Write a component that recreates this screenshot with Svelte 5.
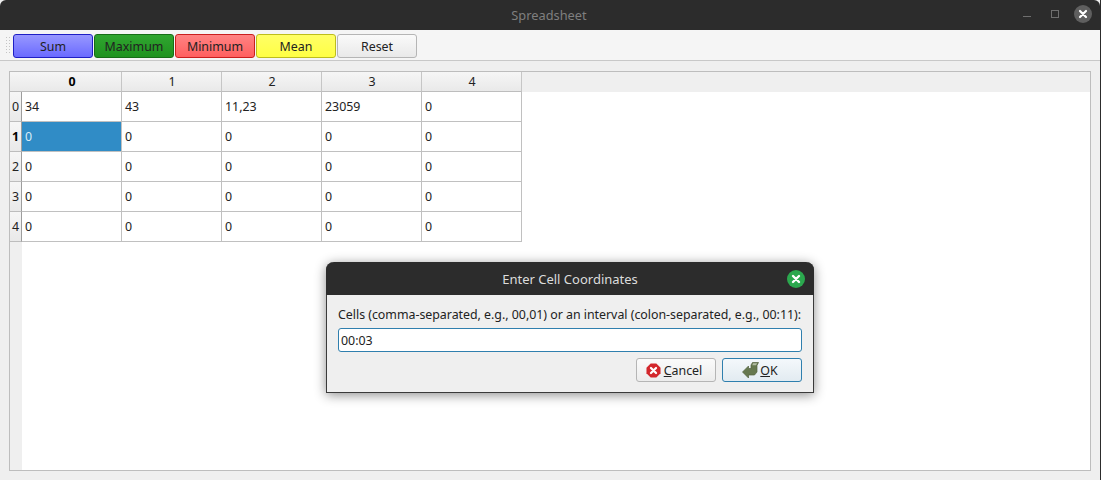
<script lang="ts">
	const columns = [0, 1, 2, 3, 4];
	const rows = [
		['34', '43', '11,23', '23059', '0'],
		['0', '0', '0', '0', '0'],
		['0', '0', '0', '0', '0'],
		['0', '0', '0', '0', '0'],
		['0', '0', '0', '0', '0']
	];
	const actions = [
		{ label: 'Sum', kind: 'sum' },
		{ label: 'Maximum', kind: 'max' },
		{ label: 'Minimum', kind: 'min' },
		{ label: 'Mean', kind: 'mean' },
		{ label: 'Reset', kind: 'reset' }
	];
	const currentRow = 1;
	const currentCol = 0;
	let coords = $state('00:03');
</script>

<div class="window">
	<header class="titlebar">
		<span class="title">Spreadsheet</span>
		<div class="controls">
			<span class="minimize"></span>
			<span class="maximize"></span>
			<span class="close">
				<svg width="18" height="18" viewBox="0 0 18 18"><path d="M6 6l6 6M12 6l-6 6" stroke="#fff" stroke-width="2.2" stroke-linecap="round" /></svg>
			</span>
		</div>
	</header>

	<div class="toolbar">
		<span class="grip"></span>
		{#each actions as action}
			<button class="tool {action.kind}">{action.label}</button>
		{/each}
	</div>

	<main class="content">
		<div class="frame">
			<div class="head">
				<div class="corner"></div>
				{#each columns as col}
					<div class="col-head" class:active={col === currentCol}>{col}</div>
				{/each}
			</div>
			<div class="body">
				<div class="row-heads">
					{#each rows as _, r}
						<div class="row-head" class:active={r === currentRow}>{r}</div>
					{/each}
				</div>
				<div class="cells">
					{#each rows as row, r}
						{#each row as value, c}
							<div class="cell" class:selected={r === currentRow && c === currentCol}>{value}</div>
						{/each}
					{/each}
				</div>
			</div>
		</div>
	</main>

	<div class="dialog">
		<div class="dialog-title">
			<span>Enter Cell Coordinates</span>
			<span class="dialog-close">
				<svg width="18" height="18" viewBox="0 0 18 18"><path d="M6 6l6 6M12 6l-6 6" stroke="#fff" stroke-width="2.4" stroke-linecap="round" /></svg>
			</span>
		</div>
		<div class="dialog-body">
			<p class="prompt">Cells (comma-separated, e.g., 00,01) or an interval (colon-separated, e.g., 00:11):</p>
			<input class="coords" bind:value={coords} />
			<div class="buttons">
				<button class="dlg-btn">
					<svg width="15" height="15" viewBox="0 0 16 16">
						<path d="M5 .5h6L15.500 5v6L11 15.500H5L.5 11V5z" fill="#d3272c" />
						<path d="M5.300 5.300l5.400 5.400M10.700 5.300l-5.400 5.400" stroke="#fff" stroke-width="2.400" stroke-linecap="round" />
					</svg>
					<span><u>C</u>ancel</span>
				</button>
				<button class="dlg-btn ok">
					<svg width="17" height="18" viewBox="0 0 17 18">
						<path d="M.5 11L6.500 5v2.500H9V4l1.500-2.500H16.500L15 4.500v6.500L12.500 14H6.500v3z" fill="#66784f" stroke="#55633f" stroke-width=".7" stroke-linejoin="round" />
						<path d="M11 2.300h4.200L14 4.200h-3.700z" fill="#b3bda3" />
					</svg>
					<span><u>O</u>K</span>
				</button>
			</div>
		</div>
	</div>
</div>

<style>
	:global(body) {
		margin: 0;
		background: #efefef;
	}

	.window {
		position: relative;
		width: 1101px;
		height: 480px;
		overflow: hidden;
		display: flex;
		flex-direction: column;
		background: #efefef;
		font-family: 'Noto Sans', 'Liberation Sans', sans-serif;
		font-size: 12.4px;
		color: #222;
		box-sizing: border-box;
		border-right: 1px solid #2c2c2c;
	}

	.titlebar {
		height: 30px;
		flex: none;
		background: #2c2c2c;
		border-radius: 6px 6px 0 0;
		display: flex;
		align-items: center;
		justify-content: center;
		position: relative;
	}

	.title {
		color: #7f7f7f;
		font-size: 12.8px;
		margin-right: 2px;
	}

	.controls {
		position: absolute;
		left: 1023px;
		top: 5px;
		display: flex;
		align-items: flex-start;
	}

	.minimize {
		width: 8px;
		height: 1px;
		background: #6f6f6f;
		margin-top: 11px;
	}

	.maximize {
		width: 6px;
		height: 6px;
		border: 1px solid #6f6f6f;
		margin: 5px 15px 0 20px;
	}

	.close {
		width: 18px;
		height: 18px;
		border-radius: 50%;
		background: #5f5f5f;
		display: flex;
	}

	.toolbar {
		height: 31px;
		flex: none;
		box-sizing: border-box;
		background: #f5f5f5;
		border-bottom: 1px solid #c8c8c8;
		display: flex;
		align-items: flex-start;
		padding: 4px 0 0 13px;
		gap: 1px;
		position: relative;
	}

	.grip {
		position: absolute;
		left: 5px;
		top: 6px;
		width: 6px;
		height: 18px;
		background-image: radial-gradient(circle, #c4c4c4 0.8px, transparent 1px);
		background-size: 3px 3px;
	}

	.tool {
		width: 80px;
		height: 24px;
		padding: 0;
		border-radius: 3px;
		border: 1px solid #b5b5b5;
		font: inherit;
		color: #222;
		background: linear-gradient(#fafafa, #e9e9e9);
	}

	.sum {
		border-color: #1f1fc4;
		background: linear-gradient(#9898ff, #6a6aff);
	}

	.max {
		border-color: #176d17;
		background: linear-gradient(#30a530, #1f931f);
	}

	.min {
		border-color: #c91e1e;
		background: linear-gradient(#ff8383, #ff5f5f);
	}

	.mean {
		border-color: #bdbd1c;
		background: linear-gradient(#ffff66, #ffff44);
	}

	.content {
		flex: 1;
		min-height: 0;
		padding: 10px 9px 9px 9px;
		display: flex;
	}

	.frame {
		flex: 1;
		box-sizing: border-box;
		border: 1px solid #bdbdbd;
		background: #fff;
		display: flex;
		flex-direction: column;
	}

	.head {
		display: flex;
		height: 20px;
		flex: none;
		background: #efefef;
	}

	.corner {
		width: 12px;
		box-sizing: border-box;
		background: linear-gradient(#f6f6f6, #e9e9e9);
		border-bottom: 1px solid #bdbdbd;
	}

	.col-head {
		width: 100px;
		box-sizing: border-box;
		text-align: center;
		line-height: 19px;
		padding-left: 1px;
		background: linear-gradient(#f6f6f6, #e9e9e9);
		border-right: 1px solid #c6c6c6;
		border-bottom: 1px solid #bdbdbd;
	}

	.active {
		font-weight: 700;
		color: #000;
	}

	.body {
		flex: 1;
		min-height: 0;
		display: flex;
		align-items: flex-start;
	}

	.row-heads {
		width: 12px;
		align-self: stretch;
		flex: none;
		background: #efefef;
	}

	.row-head {
		height: 30px;
		box-sizing: border-box;
		text-align: center;
		line-height: 29px;
		background: linear-gradient(#f6f6f6, #e9e9e9);
		border-right: 1px solid #9d9d9d;
		border-bottom: 1px solid #bdbdbd;
	}

	.cells {
		display: grid;
		grid-template-columns: repeat(5, 100px);
		grid-auto-rows: 30px;
	}

	.cell {
		box-sizing: border-box;
		padding-left: 3px;
		line-height: 29px;
		border-right: 1px solid #c0c0c0;
		border-bottom: 1px solid #c0c0c0;
	}

	.selected {
		background: #308cc6;
		color: #d8ecf8;
	}

	.dialog {
		position: absolute;
		left: 326px;
		top: 262px;
		width: 488px;
		height: 131px;
		box-sizing: border-box;
		background: #efefef;
		border-radius: 8px 8px 0 0;
		border: 1px solid #3a3a3a;
		border-top: none;
		box-shadow: 0 2px 12px rgba(0, 0, 0, 0.45);
		display: flex;
		flex-direction: column;
	}

	.dialog-title {
		height: 33px;
		flex: none;
		background: #2c2c2c;
		border-radius: 8px 8px 0 0;
		margin: 0 -1px;
		color: #dcdcdc;
		font-size: 13px;
		display: flex;
		align-items: center;
		justify-content: center;
		position: relative;
	}

	.dialog-close {
		position: absolute;
		right: 9px;
		top: 8px;
		width: 18px;
		height: 18px;
		border-radius: 50%;
		background: #2ba84e;
		display: flex;
	}

	.dialog-body {
		flex: 1;
		padding: 0 11px;
		display: flex;
		flex-direction: column;
	}

	.prompt {
		margin: 11px 0 0;
		height: 17px;
		line-height: 17px;
		letter-spacing: -0.02px;
		white-space: nowrap;
	}

	.coords {
		margin-top: 5px;
		height: 24px;
		box-sizing: border-box;
		border: 1px solid #2f7fae;
		border-radius: 3px;
		background: #fff;
		padding: 0 2px;
		font: inherit;
		color: #222;
		outline: none;
	}

	.buttons {
		margin-top: 6px;
		display: flex;
		justify-content: flex-end;
		gap: 6px;
	}

	.dlg-btn {
		width: 80px;
		height: 24px;
		padding: 0 4px 0 0;
		box-sizing: border-box;
		border: 1px solid #b5b5b5;
		border-radius: 3px;
		background: linear-gradient(#fbfbfb, #ececec);
		font: inherit;
		color: #222;
		display: flex;
		align-items: center;
		justify-content: center;
		gap: 3px;
	}

	.ok {
		border-color: #2f7fae;
		background: linear-gradient(#f4f8fb, #e2ebf1);
		gap: 1px;
	}
</style>
